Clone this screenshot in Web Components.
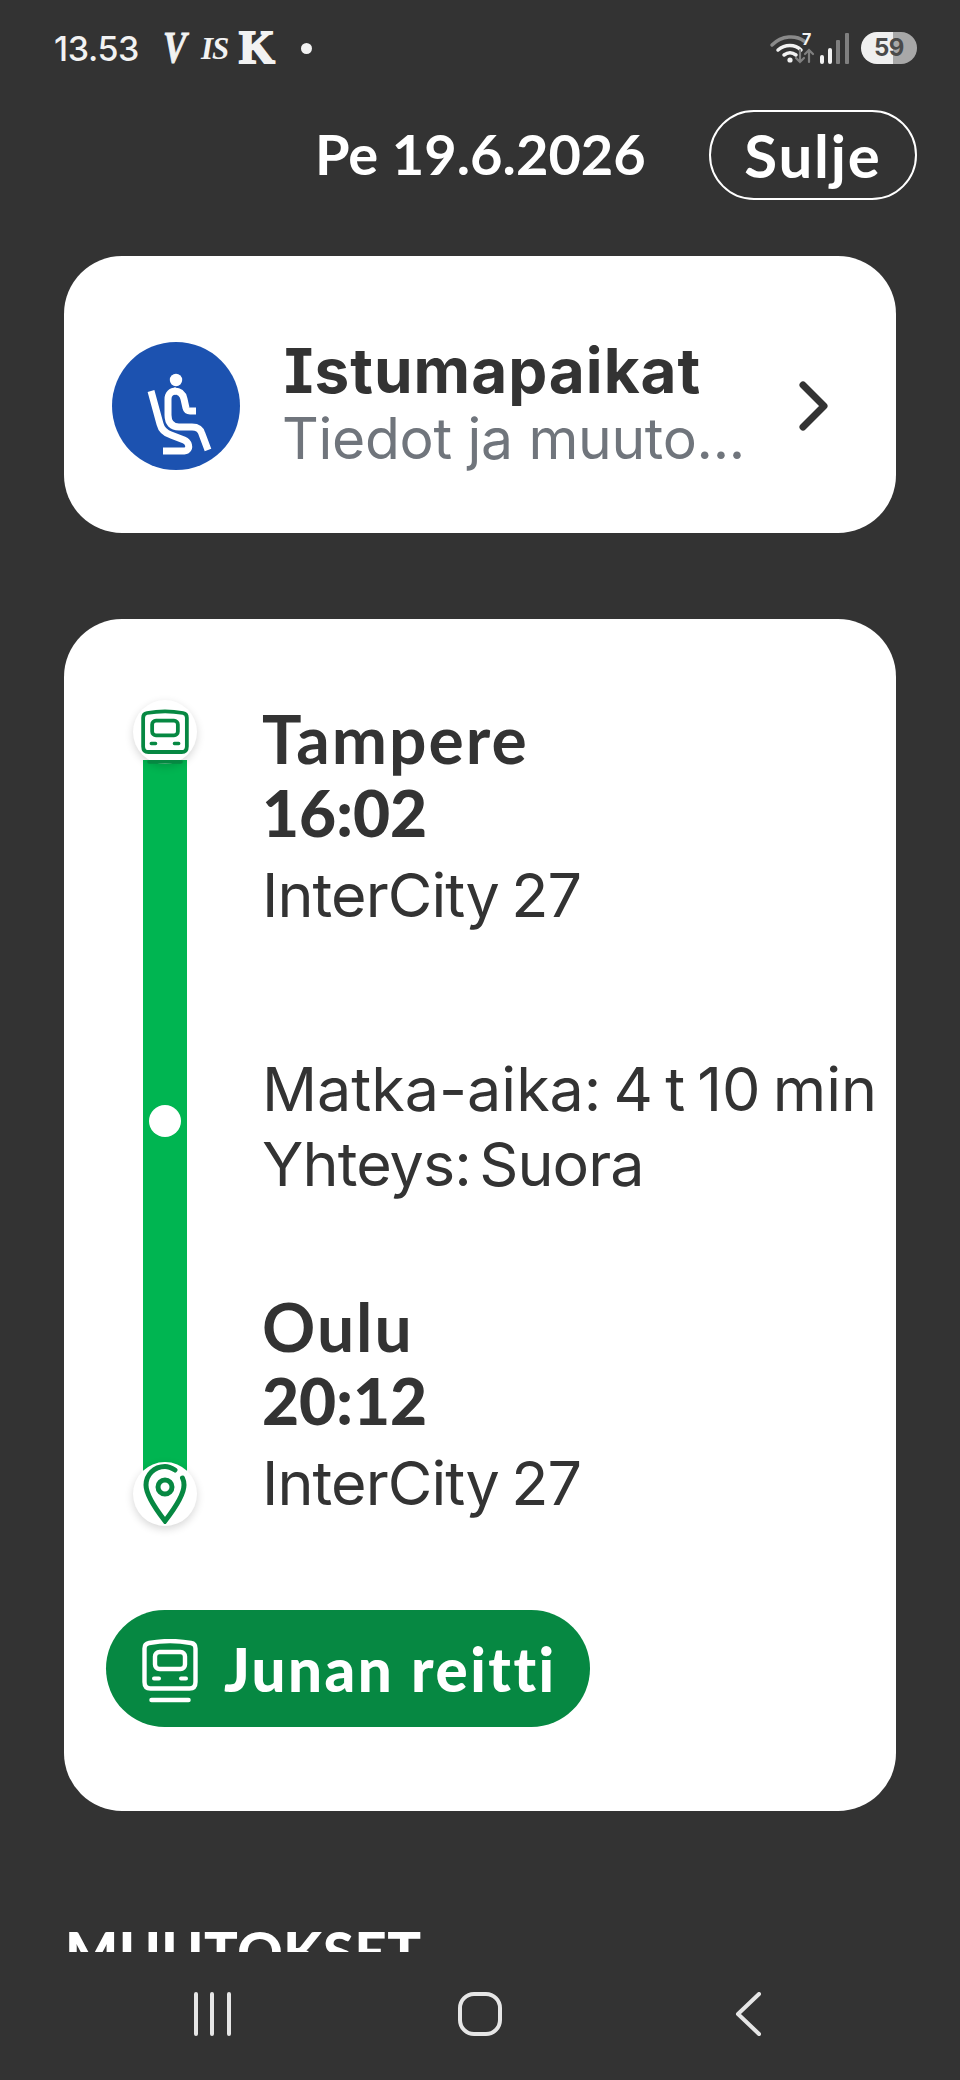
<!doctype html>
<html lang="fi"><head><meta charset="utf-8"><title>Matka</title>
<style>html,body{margin:0;padding:0;background:#333}</style></head>
<body>
<vr-app></vr-app>
<template id="t-train"><style>:host{display:inline-block;line-height:0}svg{display:block;width:100%;height:100%}</style>
<svg viewBox="0 0 56 64" fill="none" stroke="currentColor" stroke-width="4.4"><path d="M2.5 9.5C2.5 6 4 4.5 7 4C20 1.6 36 1.6 49 4C52 4.500 53.500 6 53.500 9.500V43C53.500 47 51.500 49.500 47.500 49.500H8.500C4.500 49.500 2.500 47 2.500 43Z"/><rect x="13" y="13" width="30" height="17" rx="4.500"/><path d="M12 39.500h5M39 39.500h5" stroke-linecap="round" stroke-width="4"/><path d="M9.500 61h37" stroke-width="4.500" stroke-linecap="round"/></svg></template>
<script>
const define=(name,html,init)=>customElements.define(name,class extends HTMLElement{constructor(){super();this.attachShadow({mode:'open'}).innerHTML=html;if(init)init(this)}});
const trainHTML=document.getElementById('t-train').innerHTML;
define('vr-train',trainHTML);

define('vr-status',`<style>
:host{display:flex;align-items:center;height:96px;padding:0 43px 0 54px;color:#f2f2f2;font-family:Inter,"Liberation Sans",sans-serif;box-sizing:border-box;flex:none}
.t{font-size:34px;font-weight:500;letter-spacing:-.4px;width:109px}
.v,.is,.k{font-family:"Liberation Serif",serif;font-weight:700;line-height:1}
.v{font-style:italic;font-size:44px;width:38px;-webkit-text-stroke:1px #f2f2f2;transform:scaleX(.8);transform-origin:left}
.is{font-style:italic;font-size:31px;width:38px;letter-spacing:-1px}
.k{font-size:46px;width:62px;-webkit-text-stroke:2px #f2f2f2}
.d{width:11px;height:11px;border-radius:50%;background:#f2f2f2}
.sp{flex:1}
svg{display:block;overflow:visible}
.wifi{position:relative;display:block;width:84px;height:32px}
.seven{position:absolute;left:34px;top:-2px;font-size:16px;line-height:18px;font-weight:700;color:#f2f2f2}
.bat{width:56px;height:32px;border-radius:16px;background:linear-gradient(90deg,#efefef 0 58%,#a8a8a8 58%);color:#4a4a4a;font-size:24px;font-weight:700;text-align:center;line-height:32px;margin-left:9px;letter-spacing:-.5px}
</style>
<span class="t">13.53</span><span class="v">V</span><span class="is">IS</span><span class="k">K</span><span class="d"></span><span class="sp"></span>
<span class="wifi"><svg width="84" height="32" viewBox="0 0 84 32" fill="none" stroke-linecap="round">
<path d="M4 13C14 3 28 3 36 9" stroke="#8a8a8a" stroke-width="3.500"/><path d="M10 18C17 12 27 12 33 18" stroke="#f2f2f2" stroke-width="3.500"/><path d="M16 23C20 20 24 20 28 23" stroke="#f2f2f2" stroke-width="3.500"/><circle cx="22" cy="28" r="2.600" fill="#f2f2f2"/>
<path d="M32 18v12M28 26l4 4 4-4" stroke="#808080" stroke-width="2.200"/><path d="M41 30V18M37 22l4-4 4 4" stroke="#808080" stroke-width="2.200"/>
<rect x="52" y="23" width="4" height="9" rx="2" fill="#f2f2f2"/><rect x="60" y="16" width="4" height="16" rx="2" fill="#f2f2f2"/><rect x="68" y="8" width="4" height="24" rx="1" fill="#808080"/><rect x="77" y="1" width="4" height="31" rx="1" fill="#808080"/></svg><span class="seven">7</span></span>
<span class="bat">59</span>`);

define('vr-header',`<style>
:host{display:flex;align-items:center;height:90px;padding:14px 43px 0 315px;color:#fff;font-family:Lato,sans-serif;font-weight:700;font-size:56px;flex:none;justify-content:space-between}
.d{margin-top:-4px}
.b{box-sizing:border-box;width:208px;height:90px;border:2.500px solid #fff;border-radius:45px;display:flex;align-items:center;justify-content:center;font-size:60px;letter-spacing:1.800px;line-height:1}
</style><span class="d">Pe 19.6.2026</span><span class="b">Sulje</span>`);

define('vr-seat-card',`<style>
:host{display:flex;align-items:center;box-sizing:border-box;height:277px;margin:56px 64px 0;padding:22px 67px 0 48px;background:#fff;border-radius:58px;flex:none}
.c{width:128px;height:128px;border-radius:50%;background:#1c52b0;flex:none}
.x{flex:1;margin-left:44px;min-width:0;margin-top:-4px}
.a{font:700 62px/70px Inter,sans-serif;font-feature-settings:"cv08","ss02";color:#333;letter-spacing:1px}
.b{font:400 57px/66px Inter,sans-serif;color:#70757c;margin-left:-2px;white-space:nowrap;letter-spacing:-.3px}
</style>
<svg class="c" viewBox="0 0 128 128" fill="none" stroke="#fff" stroke-width="7" stroke-linecap="butt" stroke-linejoin="round">
<circle cx="64" cy="38" r="6.200" fill="#fff" stroke="none"/>
<path d="M39 49l9 33c1.500 6 5 9 11 11l13 5c5 2 6 8 3 10-1 1-3 1-5 1H51" /><path d="M64 49c-5 0-8 3-8 8v16c0 8 4 12 11 12h13c6 0 9 3 10 7l6 16"/><path d="M62 49c6 0 9 3 10 8l2 9c.5 2 2 3 4 3h6"/></svg>
<div class="x"><div class="a">Istumapaikat</div><div class="b">Tiedot ja muuto...</div></div>
<svg width="30" height="50" viewBox="0 0 30 50" fill="none" stroke="#333" stroke-width="7" stroke-linecap="round" stroke-linejoin="round"><path d="M4 4l21 21L4 46"/></svg>`);

define('vr-route-card',`<style>
:host{display:block;box-sizing:border-box;height:1192px;margin:86px 64px 0;padding:83px 0 0;background:#fff;border-radius:58px;flex:none;color:#333;font-family:Lato,sans-serif}
.tl{display:flex;height:802px}
.rail{position:relative;width:44px;margin:58px 75px 24px 79px;background:#00b551;flex:none}
.badge{position:absolute;left:-10px;width:64px;height:64px;border-radius:50%;background:#fff;box-shadow:0 3px 9px rgba(0,0,0,.16);display:flex;align-items:center;justify-content:center;color:#068842}
.top{top:-60px}
.top vr-train{width:48px;height:56px;margin-top:9px}
.bot{bottom:-46px}
.dot{position:absolute;left:6px;top:345px;width:32px;height:32px;border-radius:50%;background:#fff}
.x b{display:block;font-weight:900;font-size:64px;line-height:74px}
.x b.nm{font-size:66px;font-weight:700;letter-spacing:2px}
.x p{margin:0;font:400 61px/75px Inter,sans-serif;letter-spacing:-.9px;word-spacing:-4px;white-space:nowrap}
.x p.m{margin-top:119px;letter-spacing:0;word-spacing:-5px}
.x p.y{word-spacing:-8px}
.x b.n{margin-top:88px}
.x p.ic{margin-top:8px}
.btn{display:flex;align-items:center;box-sizing:border-box;width:484px;height:117px;margin:106px 0 0 42px;border-radius:59px;background:#068842;color:#fff;font-weight:900;font-size:60px;letter-spacing:2.500px;padding-left:36px}
.btn vr-train{width:56px;height:64px;margin-right:26px;margin-top:4px}
</style>
<div class="tl"><div class="rail">
<div class="badge top"><vr-train></vr-train></div><span class="dot"></span>
<div class="badge bot"><svg width="44" height="60" viewBox="0 0 44 60" fill="none" stroke="#068842" stroke-width="5" stroke-linecap="round"><path d="M32 6C28 3.500 25 2.500 22 2.500C11 2.500 3 11 3 21C3 32 15 48 22 57C29 48 41 32 41 21C41 18.500 40.500 16 39.500 14"/><circle cx="22" cy="23" r="7" /></svg></div>
</div><div class="x">
<b class="nm">Tampere</b><b>16:02</b><p class="ic">InterCity 27</p>
<p class="m">Matka-aika: 4 t 10 min</p><p class="y">Yhteys: Suora</p>
<b class="n nm">Oulu</b><b>20:12</b><p class="ic">InterCity 27</p>
</div></div>
<div class="btn"><vr-train></vr-train><span>Junan reitti</span></div>`);

define('vr-section',`<style>:host{display:block;margin:108px 0 0 65px;color:#fff;font:900 56px/64px Lato,sans-serif;letter-spacing:.7px;flex:none}</style><slot></slot>`);

define('vr-nav',`<style>:host{display:flex;align-items:center;height:128px;flex:none;box-sizing:border-box;justify-content:space-between;padding:0 198px 5px 194px}
svg{display:block}.h{margin-right:8px}</style>
<svg width="38" height="44" viewBox="0 0 38 44" stroke="#e6e6e6" stroke-width="4" stroke-linecap="round"><path d="M2 2v40M18 2v40M35 2v40"/></svg>
<svg class="h" width="44" height="44" viewBox="0 0 44 44" fill="none" stroke="#e6e6e6" stroke-width="4"><rect x="2" y="2" width="40" height="40" rx="14"/></svg>
<svg width="27" height="44" viewBox="0 0 27 44" fill="none" stroke="#e6e6e6" stroke-width="4" stroke-linecap="round" stroke-linejoin="round"><path d="M24 2L3 22l21 20"/></svg>`);

define('vr-app',`<style>:host{display:flex;flex-direction:column;height:2080px;width:960px;background:#333;overflow:hidden}
.s{height:1952px;overflow:hidden;display:flex;flex-direction:column;flex:none}</style>
<div class="s"><vr-status></vr-status><vr-header></vr-header><vr-seat-card></vr-seat-card><vr-route-card></vr-route-card><vr-section>MUUTOKSET</vr-section></div><vr-nav></vr-nav>`);
</script>
</body></html>
